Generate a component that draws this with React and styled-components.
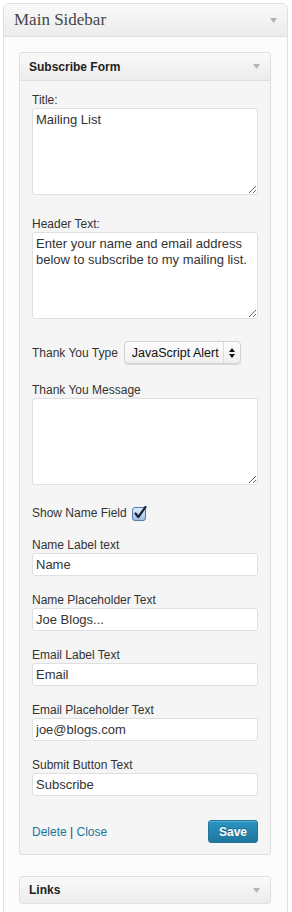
import React from "react";
import styled, { createGlobalStyle } from "styled-components";

const GlobalStyle = createGlobalStyle`
  body {
    margin: 0;
    background: #fff;
    font-family: "Liberation Sans", Arial, sans-serif;
  }
`;

function Arrow() {
  return (
    <svg width="7" height="5" viewBox="0 0 7 5">
      <path d="M0 0 H7 L3.5 5 Z" fill="#b4b4b4" />
    </svg>
  );
}

function CheckMark() {
  return (
    <svg width="15" height="15" viewBox="0 0 15 15">
      <defs>
        <linearGradient id="cb" x1="0" y1="0" x2="0" y2="1">
          <stop offset="0" stopColor="#e4eefa" />
          <stop offset="1" stopColor="#9fbde2" />
        </linearGradient>
      </defs>
      <rect x="0.5" y="1.5" width="13" height="13" rx="2.5" fill="url(#cb)" stroke="#5679a6" />
      <path d="M3.5 7.5 L6.3 11 L13.5 1" fill="none" stroke="#14233f" strokeWidth="2.2" strokeLinecap="round" strokeLinejoin="round" />
    </svg>
  );
}

function HomePage() {
  return (
    <Page>
      <GlobalStyle />
      <Sidebar>
        <SidebarHeader>
          <h2>Main Sidebar</h2>
          <Arrow />
        </SidebarHeader>
        <SidebarBody>
          <Widget gap={21}>
            <WidgetHeader open>
              <h3>Subscribe Form</h3>
              <Arrow />
            </WidgetHeader>
            <WidgetContent>
              <Field gap={21}>
                <Label>Title:</Label>
                <TextArea defaultValue="Mailing List" />
              </Field>
              <Field gap={22}>
                <Label>Header Text:</Label>
                <TextArea defaultValue="Enter your name and email address below to subscribe to my mailing list." />
              </Field>
              <InlineRow gap={18}>
                <Label>Thank You Type</Label>
                <SelectBox>
                  <span className="value">JavaScript Alert</span>
                  <span className="arrows">
                    <svg width="6" height="10" viewBox="0 0 6 10">
                      <path d="M0 4 L3 0 L6 4 Z M0 6 L3 10 L6 6 Z" fill="#111" />
                    </svg>
                  </span>
                </SelectBox>
              </InlineRow>
              <Field gap={20}>
                <Label>Thank You Message</Label>
                <TextArea defaultValue="" />
              </Field>
              <InlineRow gap={16} height={16}>
                <Label>Show Name Field</Label>
                <CheckMark />
              </InlineRow>
              <Field gap={16}>
                <Label>Name Label text</Label>
                <TextInput defaultValue="Name" />
              </Field>
              <Field gap={16}>
                <Label>Name Placeholder Text</Label>
                <TextInput defaultValue="Joe Blogs..." />
              </Field>
              <Field gap={16}>
                <Label>Email Label Text</Label>
                <TextInput defaultValue="Email" />
              </Field>
              <Field gap={16}>
                <Label>Email Placeholder Text</Label>
                <TextInput defaultValue="joe@blogs.com" />
              </Field>
              <Field gap={24}>
                <Label>Submit Button Text</Label>
                <TextInput defaultValue="Subscribe" />
              </Field>
              <WidgetFooter>
                <div className="links">
                  <a>Delete</a> <span>|</span> <a>Close</a>
                </div>
                <SaveButton>Save</SaveButton>
              </WidgetFooter>
            </WidgetContent>
          </Widget>
          <Widget>
            <WidgetHeader>
              <h3>Links</h3>
              <Arrow />
            </WidgetHeader>
          </Widget>
        </SidebarBody>
      </Sidebar>
    </Page>
  );
}

const Page = styled.div`
  padding: 3px;
`;

const Sidebar = styled.div`
  width: 285px;
  min-height: 930px;
  box-sizing: border-box;
  border: 1px solid #dfdfdf;
  border-radius: 6px 6px 0 0;
  background: #fcfcfc;
`;

const SidebarHeader = styled.div`
  height: 32px;
  padding: 0 10px;
  display: flex;
  align-items: center;
  justify-content: space-between;
  border-bottom: 1px solid #dfdfdf;
  border-radius: 6px 6px 0 0;
  background: linear-gradient(to bottom, #f9f9f9, #ececec);
  h2 {
    margin: 0;
    font-family: "Liberation Serif", "Times New Roman", serif;
    font-weight: 400;
    font-size: 17px;
    color: #464646;
  }
`;

const SidebarBody = styled.div`
  padding: 15px 15px 0;
`;

const Widget = styled.div`
  width: 252px;
  box-sizing: border-box;
  border: 1px solid #dfdfdf;
  border-radius: 3px;
  background: #f5f5f5;
  margin-bottom: ${(p) => p.gap || 0}px;
`;

const WidgetHeader = styled.div`
  height: ${(p) => (p.open ? 27 : 26)}px;
  padding: 0 10px 0 9px;
  display: flex;
  align-items: center;
  justify-content: space-between;
  border-bottom: ${(p) => (p.open ? "1px solid #dfdfdf" : "none")};
  border-radius: 3px 3px 0 0;
  background: linear-gradient(to bottom, #f9f9f9, #ececec);
  h3 {
    margin: 0;
    font-size: 12px;
    font-weight: 700;
    color: #222;
  }
`;

const WidgetContent = styled.div`
  padding: 11px 12px 11px;
`;

const Field = styled.div`
  margin-bottom: ${(p) => p.gap}px;
`;

const Label = styled.div`
  font-size: 12px;
  line-height: 16px;
  color: #333;
`;

const TextArea = styled.textarea`
  display: block;
  width: 100%;
  height: 87px;
  box-sizing: border-box;
  margin: 0;
  padding: 3px;
  border: 1px solid #dfdfdf;
  border-radius: 3px;
  background: #fff;
  font-family: "Liberation Sans", Arial, sans-serif;
  font-size: 13px;
  line-height: 16px;
  color: #333;
  outline: none;
`;

const TextInput = styled.input`
  display: block;
  width: 100%;
  height: 23px;
  box-sizing: border-box;
  margin: 0;
  padding: 0 3px;
  border: 1px solid #dfdfdf;
  border-radius: 3px;
  background: #fff;
  font-family: "Liberation Sans", Arial, sans-serif;
  font-size: 13px;
  color: #333;
  outline: none;
`;

const InlineRow = styled.div`
  display: flex;
  align-items: center;
  gap: 5px;
  height: ${(p) => p.height || 23}px;
  margin-bottom: ${(p) => p.gap}px;
`;

const SelectBox = styled.div`
  display: flex;
  align-items: stretch;
  height: 23px;
  width: 117px;
  box-sizing: border-box;
  margin-left: 1px;
  border: 1px solid #d2d2d2;
  border-radius: 4px;
  background: linear-gradient(to bottom, #fdfdfd, #efefef);
  box-shadow: 0 1px 1px rgba(0, 0, 0, 0.12);
  font-size: 12.5px;
  color: #111;
  .value {
    flex: 1;
    display: flex;
    align-items: center;
    padding-left: 7px;
    white-space: nowrap;
  }
  .arrows {
    width: 16px;
    display: flex;
    align-items: center;
    justify-content: center;
    border-left: 1px solid #dcdcdc;
  }
`;

const WidgetFooter = styled.div`
  display: flex;
  align-items: center;
  justify-content: space-between;
  .links {
    font-size: 12px;
    color: #21759b;
    a {
      color: #21759b;
    }
    span {
      color: #2b3f7e;
    }
  }
`;

const SaveButton = styled.button`
  width: 50px;
  height: 23px;
  padding: 0;
  border: 1px solid #21759b;
  border-radius: 3px;
  background: linear-gradient(to bottom, #2a95c5, #21759b);
  color: #fff;
  font-family: "Liberation Sans", Arial, sans-serif;
  font-size: 12px;
  font-weight: 700;
  text-shadow: 0 -1px 0 rgba(0, 0, 0, 0.3);
  box-shadow: inset 0 1px 0 rgba(120, 200, 230, 0.5);
`;

export default HomePage;
